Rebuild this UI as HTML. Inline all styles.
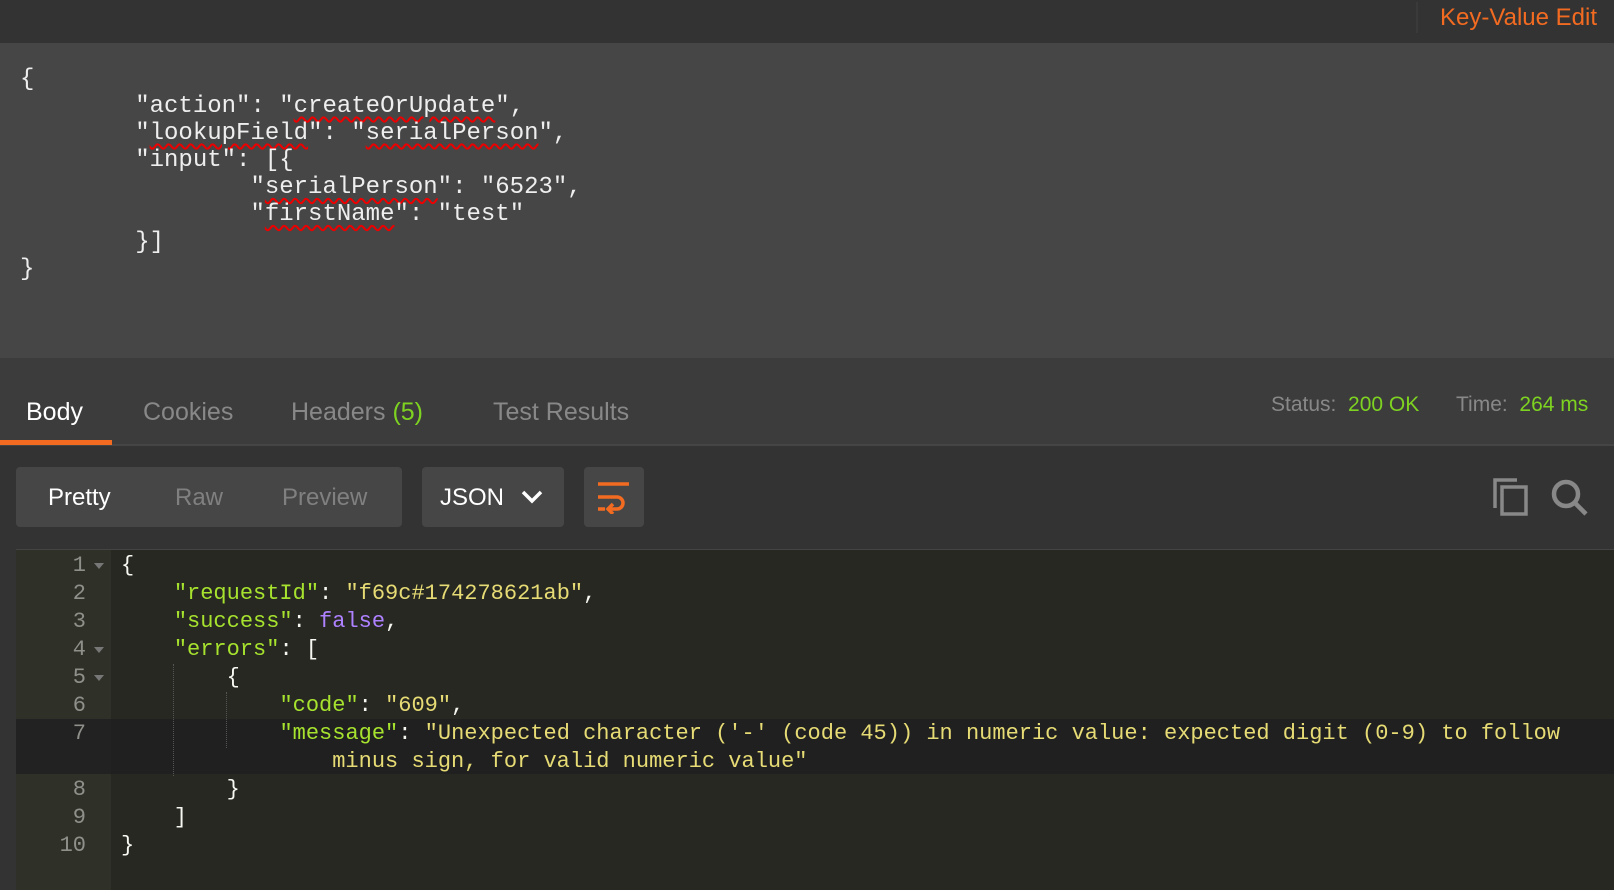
<!DOCTYPE html>
<html><head><meta charset="utf-8"><style>
*{margin:0;padding:0;box-sizing:border-box}
body{width:1614px;height:890px;background:#333;overflow:hidden;position:relative;font-family:"Liberation Sans",sans-serif}
.abs{position:absolute}
#top{left:0;top:0;width:1614px;height:43px;background:#333}
#sep{left:1416px;top:2px;width:2px;height:31px;background:#3a3a3a}
#kv{right:17px;top:4px;color:#f26b21;font-size:24px}
#ed{left:0;top:43px;width:1614px;height:315px;background:#464646}
#ed pre{position:absolute;left:20px;top:23px;font-family:"Liberation Mono",monospace;font-size:24px;line-height:27.1px;color:#eee}
.sq{text-decoration:underline wavy #e00;text-decoration-thickness:1.5px;text-underline-offset:4px}
#tabs{left:0;top:358px;width:1614px;height:88px;background:#3c3c3c;border-bottom:2px solid #454545}
.tab{position:absolute;top:40px;font-size:25px;color:#888}
#ul{left:0;top:440px;width:112px;height:5px;background:#f26b21}
.st{position:absolute;top:35px;font-size:21px;color:#888}
.g{color:#7ed321}
.btn{position:absolute;top:467px;height:60px;background:#464646;border-radius:4px}
.bt{position:absolute;top:17px;font-size:24px}
#code{left:16px;top:549px;width:1598px;height:341px;background:#272822;border-top:1px solid #444;border-left:1px solid #444}
#gut{left:16px;top:550px;width:95px;height:340px;background:#2f3129}
#hl{left:16px;top:719px;width:1598px;height:55px;background:#202020}
#hlg{left:16px;top:719px;width:95px;height:55px;background:#222}
.ln{position:absolute;width:70px;text-align:right;font-family:"Liberation Mono",monospace;font-size:22px;color:#8f908a;left:16px}
.fa{position:absolute;left:94px;width:0;height:0;border-left:5px solid transparent;border-right:5px solid transparent;border-top:6px solid #777}
#src{left:121px;top:552px;font-family:"Liberation Mono",monospace;font-size:22px;line-height:28px;color:#f8f8f2;white-space:pre}
.k{color:#a6e22e}.s{color:#e6db74}.p{color:#ae81ff}
.guide{position:absolute;width:0;border-left:1px dotted #555}
</style></head><body>
<div class="abs" id="top"></div><div class="abs" id="sep"></div>
<div class="abs" id="kv">Key-Value Edit</div>
<div class="abs" id="ed"><pre>{
        "action": "<span class="sq">createOrUpdate</span>",
        "<span class="sq">lookupField</span>": "<span class="sq">serialPerson</span>",
        "input": [{
                "<span class="sq">serialPerson</span>": "6523",
                "<span class="sq">firstName</span>": "test"
        }]
}</pre></div>
<div class="abs" id="tabs">
<div class="tab" style="left:26px;color:#fff">Body</div>
<div class="tab" style="left:143px">Cookies</div>
<div class="tab" style="left:291px">Headers <span class="g">(5)</span></div>
<div class="tab" style="left:493px">Test Results</div>
<div class="st" style="left:1271px">Status: &nbsp;<span class="g">200 OK</span></div>
<div class="st" style="left:1456px">Time: &nbsp;<span class="g">264 ms</span></div>
</div>
<div class="abs" id="ul"></div>
<div class="btn" style="left:16px;width:386px"><span class="bt" style="left:32px;color:#fff">Pretty</span><span class="bt" style="left:159px;color:#808080">Raw</span><span class="bt" style="left:266px;color:#808080">Preview</span></div>
<div class="btn" style="left:422px;width:142px"><span class="bt" style="left:18px;color:#fff">JSON</span>
<svg class="abs" style="left:98px;top:22px" width="24" height="16" viewBox="0 0 24 16"><path d="M3 3 L12 12 L21 3" stroke="#fff" stroke-width="3.5" fill="none"/></svg></div>
<div class="btn" style="left:584px;width:60px">
<svg class="abs" style="left:13px;top:13px" width="34" height="34" viewBox="0 0 34 34"><g stroke="#f26b21" stroke-width="3.5" fill="none"><path d="M1 4H32"/><path d="M1 17H20a6 6 0 0 1 0 12H12"/><path d="M1 29H8"/><path d="M16 24 L11 29 L16 34"/></g></svg></div>
<svg class="abs" style="left:1493px;top:478px" width="38" height="38" viewBox="0 0 38 38"><g stroke="#888" stroke-width="3.5" fill="none"><path d="M2 30V2H24"/><rect x="9" y="9" width="24" height="27"/></g></svg>
<svg class="abs" style="left:1550px;top:478px" width="40" height="40" viewBox="0 0 40 40"><g stroke="#888" stroke-width="4.5" fill="none"><circle cx="16" cy="16" r="12"/><path d="M25 25L36 36"/></g></svg>
<div class="abs" id="code"></div><div class="abs" id="gut"></div>
<div class="abs" id="hl"></div><div class="abs" id="hlg"></div>
<div class="ln" style="top:553px">1</div><div class="fa" style="top:563px"></div>
<div class="ln" style="top:581px">2</div>
<div class="ln" style="top:609px">3</div>
<div class="ln" style="top:637px">4</div><div class="fa" style="top:647px"></div>
<div class="ln" style="top:665px">5</div><div class="fa" style="top:675px"></div>
<div class="ln" style="top:693px">6</div>
<div class="ln" style="top:721px">7</div>
<div class="ln" style="top:777px">8</div>
<div class="ln" style="top:805px">9</div>
<div class="ln" style="top:833px">10</div>
<div class="guide" style="left:173px;top:664px;height:112px"></div>
<div class="guide" style="left:226px;top:692px;height:56px"></div>
<div class="abs" id="src">{
    <span class="k">"requestId"</span>: <span class="s">"f69c#174278621ab"</span>,
    <span class="k">"success"</span>: <span class="p">false</span>,
    <span class="k">"errors"</span>: [
        {
            <span class="k">"code"</span>: <span class="s">"609"</span>,
            <span class="k">"message"</span>: <span class="s">"Unexpected character ('-' (code 45)) in numeric value: expected digit (0-9) to follow</span>
<span class="s">                minus sign, for valid numeric value"</span>
        }
    ]
}</div>
</body></html>
